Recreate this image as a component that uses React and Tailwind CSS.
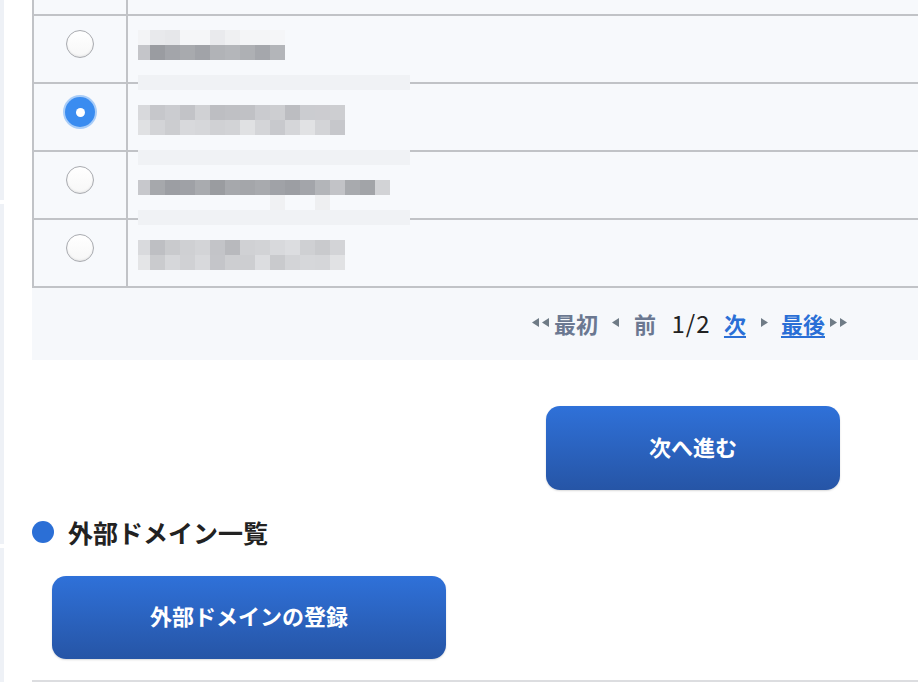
import React from 'react';

// redacted cell contents (mosaic blocks), [left, top, [colors...]]
const mosaics = [
  { x: 138, y: 30, colors: ['#f3f4f6', '#e8e9ec', '#e6e7ea', '#f5f6f8', '#f5f6f8', '#e9eaed', '#eff0f2', '#f4f5f7', '#f4f5f7', '#f5f6f8'] },
  { x: 138, y: 45, colors: ['#c4c5c9', '#9a9ca1', '#a3a5aa', '#a8aaae', '#a1a3a8', '#b1b3b7', '#b4b6ba', '#aeb0b4', '#a5a7ac', '#b3b5b9'] },
  { x: 138, y: 105, colors: ['#d8d9dc', '#c6c7cb', '#cbccd0', '#c2c3c7', '#d0d1d4', '#bdbec2', '#bfc0c4', '#c0c1c5', '#cacbcf', '#cdced1', '#bcbdc1', '#cbccd0', '#ccccd0', '#cdced1'] },
  { x: 138, y: 120, colors: ['#e0e1e3', '#d3d4d7', '#cccdd0', '#d8d9dc', '#d6d7da', '#d0d1d4', '#d2d3d6', '#e0e1e3', '#d4d5d8', '#c8c9cd', '#d5d6d9', '#e1e2e4', '#d3d4d7', '#c6c7cb'] },
  { x: 138, y: 180, colors: ['#c7c8cc', '#a6a8ac', '#9c9ea3', '#9fa1a6', '#a9abaf', '#9a9ca0', '#a6a8ac', '#a4a6aa', '#a8aaae', '#a0a2a7', '#9c9ea3', '#a3a5aa', '#b3b5b9', '#c2c3c7', '#a8aaae', '#a2a4a8', '#d2d3d6'] },
  { x: 138, y: 240, colors: ['#d9dadd', '#bebfc3', '#c9cacd', '#cfd0d3', '#d3d4d7', '#c3c4c8', '#b8b9bd', '#d0d1d4', '#d2d3d6', '#d8d9dc', '#dcdde0', '#cfd0d3', '#c9cacd', '#d3d4d7'] },
  { x: 138, y: 255, colors: ['#e4e5e7', '#cacbce', '#d6d7da', '#d0d1d4', '#d8d9dc', '#c4c5c9', '#cdced1', '#cdced1', '#dcdde0', '#c9cacd', '#d3d4d7', '#d6d7da', '#d5d6d9', '#e1e2e4'] },
];

const bands = [75, 150, 210];

const Mosaic = ({ x, y, colors }) => (
  <div className="absolute flex h-[15px]" style={{ left: x, top: y }}>
    {colors.map((c, i) => (
      <div key={i} className={i === 0 ? 'w-[12px] h-full' : 'w-[15px] h-full'} style={{ backgroundColor: c }} />
    ))}
  </div>
);

const Radio = ({ checked }) => (
  <div className="w-[92px] flex items-center justify-center pb-[10px]">
    {checked ? (
      <div className="w-[34px] h-[34px] rounded-full bg-[#a9cdf8] flex items-center justify-center">
        <div className="w-[30px] h-[30px] rounded-full bg-[#3a8cf0] flex items-center justify-center">
          <div className="w-[9px] h-[9px] rounded-full bg-white" />
        </div>
      </div>
    ) : (
      <div className="w-[28px] h-[28px] rounded-full border border-[#a9abb0] bg-gradient-to-b from-white to-[#f7f7f7] shadow-[inset_0_-1px_2px_rgba(0,0,0,0.08)]" />
    )}
  </div>
);

const Row = ({ checked }) => (
  <div className="flex h-[68px] border-b-2 border-[#c1c3c7]">
    <Radio checked={checked} />
    <div className="flex-1 border-l-2 border-[#c1c3c7]" />
  </div>
);

const Tri = ({ dir }) => (
  <svg width="7" height="9" viewBox="0 0 7 9" className="shrink-0">
    {dir === 'l' ? <path d="M7 0 L0 4.5 L7 9 Z" fill="#6f7b86" /> : <path d="M0 0 L7 4.5 L0 9 Z" fill="#6f7b86" />}
  </svg>
);

const BlueButton = ({ children, className }) => (
  <button className={`rounded-[14px] bg-gradient-to-b from-[#2f71d9] to-[#2655a6] text-white font-bold text-[22px] pb-[4px] shadow-[0_1px_2px_rgba(0,0,0,0.15)] ${className}`}>
    {children}
  </button>
);

export default function App() {
  return (
    <div className="w-[918px] h-[682px] bg-white flex overflow-hidden font-['Noto_Sans_CJK_JP','Noto_Sans',sans-serif]">
      {/* sidebar edge */}
      <div className="w-[4px] flex flex-col shrink-0">
        <div className="h-[200px] bg-[#eef1f6]" />
        <div className="h-[4px]" />
        <div className="h-[340px] bg-[#eef1f6]" />
        <div className="h-[4px]" />
        <div className="flex-1 bg-[#eef1f6]" />
      </div>

      <div className="flex-1 ml-[28px] flex flex-col">
        {/* table */}
        <div className="relative bg-[#f7f9fc] border-l-2 border-[#c1c3c7]">
          <div className="flex h-[16px] border-b-2 border-[#c1c3c7]">
            <div className="w-[92px]" />
            <div className="flex-1 border-l-2 border-[#c1c3c7]" />
          </div>
          <Row />
          <Row checked />
          <Row />
          <Row />
          {bands.map((y) => (
            <div key={y} className="absolute left-[104px] w-[272px] h-[15px] bg-[#f0f2f5]" style={{ top: y }} />
          ))}
          {mosaics.map((m, i) => (
            <Mosaic key={i} x={m.x - 34} y={m.y} colors={m.colors} />
          ))}
          <div className="absolute left-[236px] top-[195px] w-[15px] h-[15px] bg-[#f0f1f3]" />
          <div className="absolute left-[281px] top-[195px] w-[15px] h-[15px] bg-[#eeeff1]" />
        </div>

        {/* pager */}
        <div className="h-[73px] bg-[#f6f8fb] flex items-center justify-end pr-[71px] pb-[3px] text-[22px] font-bold leading-none">
          <span className="flex gap-[3px]"><Tri dir="l" /><Tri dir="l" /></span>
          <span className="ml-[5px] text-[#6b7891]">最初</span>
          <span className="ml-[14px] flex"><Tri dir="l" /></span>
          <span className="ml-[15px] text-[#6b7891]">前</span>
          <span className="ml-[15px] w-[40px] text-center text-[#222] font-normal text-[24px] tracking-[1px]">1/2</span>
          <span className="ml-[13px] text-[#2a6fd6] underline underline-offset-[3px]">次</span>
          <span className="ml-[15px] flex"><Tri dir="r" /></span>
          <span className="ml-[13px] text-[#2a6fd6] underline underline-offset-[3px]">最後</span>
          <span className="ml-[5px] flex gap-[3px]"><Tri dir="r" /><Tri dir="r" /></span>
        </div>

        <div className="flex justify-end pr-[78px] mt-[46px]">
          <BlueButton className="w-[294px] h-[84px]">次へ進む</BlueButton>
        </div>

        {/* section heading */}
        <div className="flex items-center mt-[27px] h-[30px]">
          <div className="w-[22px] h-[22px] rounded-full bg-[#2b6fd6]" />
          <h2 className="ml-[14px] text-[25px] font-bold text-[#222] leading-none">外部ドメイン一覧</h2>
        </div>

        <div className="mt-[29px] ml-[20px]">
          <BlueButton className="w-[394px] h-[83px]">外部ドメインの登録</BlueButton>
        </div>

        <div className="mt-[21px] h-[2px] bg-[#dcdde0]" />
      </div>
    </div>
  );
}
